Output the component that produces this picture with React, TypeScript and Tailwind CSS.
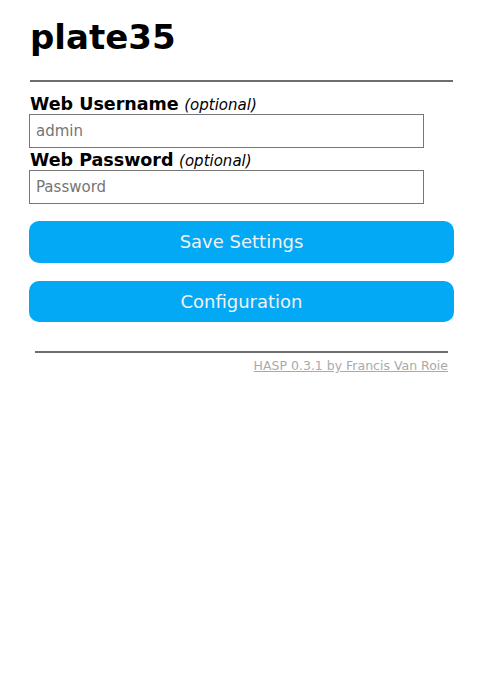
import React from "react";

export default function App() {
  return (
    <div className="min-h-[700px] bg-white pl-[29px] pt-[17px]" style={{ fontFamily: '"DejaVu Sans", Verdana, sans-serif' }}>
      <div className="w-[425px]">
        <h1 className="text-[34px] font-bold leading-[40px] text-black pl-[1px]">plate35</h1>
        <div className="mt-[23px] mx-[1px] h-[2px] bg-[#6e6e6e]" />
        <form className="mt-[12px]">
          <label className="block h-[20px] pl-[1px] text-[17.5px] leading-[20px] text-black">
            <b>Web Username</b> <i className="text-[15px]">(optional)</i>
          </label>
          <input
            className="block h-[34px] w-[395px] border border-[#767676] bg-white pl-[6px] text-[15px] text-black placeholder:text-[#757575] outline-none"
            placeholder="admin"
            style={{ fontFamily: '"DejaVu Sans", Verdana, sans-serif' }}
          />
          <label className="mt-[2px] block h-[20px] pl-[1px] text-[17.5px] leading-[20px] text-black">
            <b>Web Password</b> <i className="text-[15px]">(optional)</i>
          </label>
          <input
            type="password"
            className="block h-[34px] w-[395px] border border-[#767676] bg-white pl-[6px] text-[15px] text-black placeholder:text-[#757575] outline-none"
            placeholder="Password"
            style={{ fontFamily: '"DejaVu Sans", Verdana, sans-serif' }}
          />
          <button
            type="button"
            className="mt-[17px] block h-[42px] w-[425px] rounded-[10px] bg-[#03a9f4] text-[18px] leading-[42px] text-[#f2f2f2]"
            style={{ fontFamily: '"DejaVu Sans", Verdana, sans-serif' }}
          >
            Save Settings
          </button>
        </form>
        <button
          type="button"
          className="mt-[18px] block h-[41px] w-[425px] rounded-[10px] bg-[#03a9f4] text-[18px] leading-[41px] text-[#f2f2f2]"
          style={{ fontFamily: '"DejaVu Sans", Verdana, sans-serif' }}
        >
          Configuration
        </button>
        <div className="mt-[29px] px-[6px] text-right">
          <div className="h-[2px] bg-[#6e6e6e]" />
          <a href="#" className="mt-[5px] inline-block text-[12.5px] leading-[16px] text-[#aaaaaa] underline">
            HASP 0.3.1 by Francis Van Roie
          </a>
        </div>
      </div>
    </div>
  );
}
